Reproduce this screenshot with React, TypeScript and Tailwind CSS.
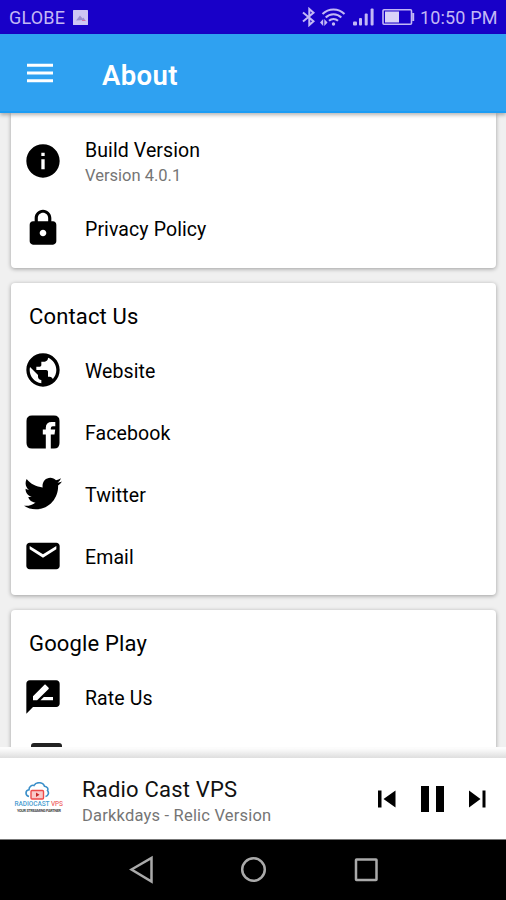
import type { ReactNode } from 'react'
import { MdInfo, MdLock, MdPublic, MdEmail, MdRateReview } from 'react-icons/md'
import { FaTwitter } from 'react-icons/fa'

function StatusBar() {
  return (
    <div className="h-[34px] shrink-0 bg-[#1800c8] flex items-center pl-[9px] pr-[9px] text-[#c3b8f5]">
      <span className="pt-px text-[18px] leading-none tracking-[0.2px] w-[57px] whitespace-nowrap">GLOBE</span>
      <svg className="ml-[7px]" width="15" height="15" viewBox="0 0 15 15">
        <rect width="15" height="15" rx="0.5" fill="#cdc6f4" />
        <path d="M3 10.5 7 5.5 9.5 8.5l1-1 1.5 2.5z" fill="#9a8fd0" />
        <path d="M9 10.5h3.5" stroke="#cf6fa8" />
      </svg>
      <div className="ml-auto flex items-center">
        <svg width="15" height="20" viewBox="0 0 15 20" fill="none" stroke="currentColor" strokeWidth="2">
          <path d="M1 5.500 11.500 14.200 7.300 18V2l4.200 3.800L1 14.500" />
        </svg>
        <svg className="ml-[3px]" width="28" height="20" viewBox="0 0 28 20" fill="none" stroke="currentColor" strokeWidth="2">
          <path d="M2.500 7a15.500 15.500 0 0 1 22 0M5.700 10.500a11 11 0 0 1 15.600 0M9 13.800a6.400 6.400 0 0 1 9 0" />
          <circle cx="13.500" cy="17" r="1.700" fill="currentColor" stroke="none" />
          <path d="M0 15.500 3.200 12v7zM7.500 15.500 4.300 12v7z" fill="currentColor" stroke="none" />
        </svg>
        <svg className="ml-[5px]" width="22" height="20" viewBox="0 0 22 20" fill="currentColor">
          <rect x="0" y="14.500" width="4" height="4" rx="1" />
          <rect x="6" y="11" width="3" height="7.500" rx="1" />
          <rect x="11.700" y="6.500" width="3" height="12" rx="1" />
          <rect x="17.600" y="1.500" width="3" height="17" rx="1" />
        </svg>
        <svg className="ml-[7px]" width="34" height="18" viewBox="0 0 34 18" fill="none">
          <rect x="1" y="1.700" width="28.500" height="14.500" rx="1" stroke="currentColor" strokeWidth="1.600" />
          <rect x="3" y="3.500" width="14" height="11" fill="#d8d2f8" />
          <path d="M31.200 5v8" stroke="currentColor" strokeWidth="2" />
        </svg>
        <span className="ml-[4px] pt-px text-[18px] leading-none tracking-[0.15px] w-[77px] whitespace-nowrap">10:50 PM</span>
      </div>
    </div>
  )
}

function Header() {
  return (
    <header className="relative z-10 h-[79px] shrink-0 bg-[#2fa1f1] border-b-2 border-[#1b9cf4] shadow-[0_2px_4px_rgba(0,0,0,0.3)] flex items-center pl-[27px] text-white">
      <svg width="26" height="20" viewBox="0 0 26 20" className="mt-[1px]">
        <path d="M0 2.200h26M0 9.900h26M0 17.700h26" stroke="#fff" strokeWidth="3" />
      </svg>
      <h1 className="ml-[49px] mt-[7px] text-[27.5px] leading-none font-semibold tracking-[0.4px]">About</h1>
    </header>
  )
}

function Row({ icon, label, detail }: { icon: ReactNode; label: string; detail?: string }) {
  return (
    <div className="flex items-center h-[62px]">
      <div className="w-[40px] h-[40px] shrink-0">{icon}</div>
      <div className={detail ? 'ml-[22px] pt-[4px]' : 'ml-[22px] pt-[3px]'}>
        <p className="text-[19.5px] leading-[24px] tracking-[0.1px]">{label}</p>
        {detail && <p className="text-[16.5px] leading-[25px] text-[#757575]">{detail}</p>}
      </div>
    </div>
  )
}

function FacebookIcon() {
  return (
    <svg width="40" height="40" viewBox="0 0 40 40">
      <path
        d="M9 3.500H31Q36.500 3.500 36.500 9V31Q36.500 36.500 31 36.500H27.800V22.500H31.500L32.200 17.500H27.800V16.200Q27.800 14.300 29.800 14.300H32.300V10H28.800Q22.800 10 22.800 15.800V17.500H19.800V22.500H22.800V36.500H9Q3.500 36.500 3.500 31V9Q3.500 3.500 9 3.500Z"
        fill="#000"
      />
    </svg>
  )
}

const contacts = [
  { label: 'Website', icon: <MdPublic size={40} /> },
  { label: 'Facebook', icon: <FacebookIcon /> },
  {
    label: 'Twitter',
    icon: <FaTwitter className="w-[38px] h-[39px] ml-[1px]" preserveAspectRatio="none" />,
  },
  { label: 'Email', icon: <MdEmail size={40} /> },
]

function Logo() {
  return (
    <svg width="50" height="34" viewBox="0 0 50 34">
      <path
        d="M15 14.500C11 13.500 11 8.500 15 7.800C15 4.200 18 2.800 20 3.500C22 -0.300 29 -0.300 30.500 4.200C33.500 4.500 34.500 7 33.500 8.500C35.500 11 34 14 31.500 14.500"
        fill="none"
        stroke="#3b8fc9"
        strokeWidth="1.600"
      />
      <rect x="17" y="8.500" width="12.500" height="8.500" rx="1" fill="#f9c9c9" stroke="#ee4a4a" strokeWidth="1.400" />
      <path d="M22 10.500v4.500l3.500-2.200z" fill="#c62828" />
      <text x="0.500" y="23.500" fontSize="6.500" fontWeight="500" textLength="35" fill="#4a9dd0">RADIOCAST</text>
      <text x="37" y="23.500" fontSize="6.500" fontWeight="500" textLength="12" fill="#f06a6a">VPS</text>
      <text x="3" y="30" fontSize="3.800" fontWeight="700" textLength="44" fill="#444">YOUR STREAMING PARTNER</text>
    </svg>
  )
}

function Player() {
  return (
    <div className="shrink-0">
      <div className="h-[11px] bg-linear-to-b from-[#fcfcfc] from-15% to-[#dedede]" />
      <div className="h-[81px] bg-white flex items-center pl-[14px] pr-[20px]">
        <Logo />
        <div className="ml-[18px] pt-[6px]">
          <p className="text-[22px] leading-[28px] tracking-[0.2px] text-[#111]">Radio Cast VPS</p>
          <p className="text-[16.5px] leading-[24px] tracking-[0.2px] text-[#757575]">Darkkdays - Relic Version</p>
        </div>
        <svg className="ml-auto" width="108" height="28" viewBox="0 0 108 28" fill="#000">
          <path d="M0 5.500h3.500v17H0zM17.500 5.500v17L5.500 14zM43 1h8v26h-8zM58 1h8v26h-8zM91 5.500v17L102.500 14zM104.500 5.500h3v17h-3z" />
        </svg>
      </div>
    </div>
  )
}

function NavBar() {
  return (
    <div className="h-[61px] shrink-0 bg-black border-t border-[#777] flex justify-center">
      <svg width="260" height="60" viewBox="0 0 260 60" fill="none" stroke="#aaa" strokeWidth="2.500">
        <path d="M8.500 29.500 28.500 18v23.500z" />
        <circle cx="130.500" cy="29.500" r="11.300" />
        <rect x="233" y="19.500" width="20.500" height="20.500" rx="0.500" />
      </svg>
    </div>
  )
}

const card = 'bg-white rounded-[4px] shadow-[0_1px_4px_rgba(0,0,0,0.35)] px-[12px]'

export default function App() {
  return (
    <div className="w-[506px] h-[900px] flex flex-col overflow-hidden bg-[#f0f0f0] text-black font-['Roboto',sans-serif]">
      <StatusBar />
      <Header />
      <main className="flex-1 min-h-0 overflow-hidden pl-[11px] pr-[10px] flex flex-col gap-[15px]">
        <section className={`${card} shrink-0 h-[155px] pt-[17px] rounded-t-none`}>
          <Row icon={<MdInfo size={40} />} label="Build Version" detail="Version 4.0.1" />
          <div className="mt-[5px]">
            <Row icon={<MdLock size={40} />} label="Privacy Policy" />
          </div>
        </section>
        <section className={`${card} shrink-0 h-[312px] pt-[21px]`}>
          <h2 className="ml-[6px] text-[22px] leading-[26px] tracking-[0.15px]">Contact Us</h2>
          <div className="mt-[9px]">
            {contacts.map((item) => (
              <Row key={item.label} icon={item.icon} label={item.label} />
            ))}
          </div>
        </section>
        <section className={`${card} shrink-0 h-[312px] pt-[21px]`}>
          <h2 className="ml-[6px] text-[22px] leading-[26px] tracking-[0.15px]">Google Play</h2>
          <div className="mt-[9px]">
            <Row icon={<MdRateReview size={40} />} label="Rate Us" />
            <div className="ml-[8px] mt-[15px] w-[31px] h-[27px] rounded-[3px] bg-[#222]" />
          </div>
        </section>
      </main>
      <Player />
      <NavBar />
    </div>
  )
}
